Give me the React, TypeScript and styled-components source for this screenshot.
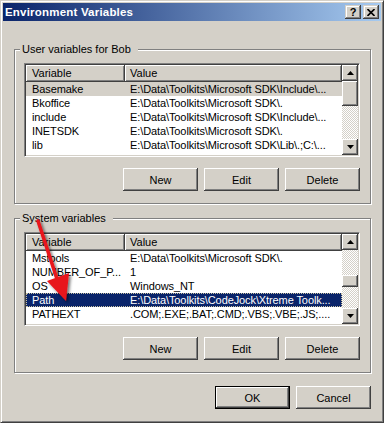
import React from 'react';
import styled, { createGlobalStyle, css } from 'styled-components';

const FACE = '#d4d0c8';

const GlobalStyle = createGlobalStyle`
  html, body {
    margin: 0;
    padding: 0;
    background: ${FACE};
  }
  body {
    font-family: "Liberation Sans", Arial, sans-serif;
    font-size: 11px;
    color: #000;
  }
`;

const raised = css`
  background: ${FACE};
  box-shadow: inset -1px -1px #404040, inset 1px 1px #fff, inset -2px -2px #808080, inset 2px 2px ${FACE};
`;

const Window = styled.div`
  position: relative;
  box-sizing: border-box;
  width: 384px;
  height: 423px;
  padding: 2px;
  background: ${FACE};
  border: 1px solid;
  border-color: ${FACE} #404040 #404040 ${FACE};
  box-shadow: inset 1px 1px #fff, inset -1px -1px #808080;
  display: flex;
  flex-direction: column;
`;

const TitleBar = styled.div`
  height: 18px;
  flex: none;
  display: flex;
  align-items: center;
  padding: 0 2px;
  background: linear-gradient(to right, #0a246a, #a6caf0);
`;

const Title = styled.span`
  color: #fff;
  font-weight: bold;
  font-size: 11.5px;
  letter-spacing: 0.2px;
  white-space: nowrap;
`;

const CaptionButtons = styled.div`
  margin-left: auto;
  display: flex;
  gap: 2px;
`;

const CaptionButton = styled.div`
  box-sizing: border-box;
  width: 16px;
  height: 14px;
  display: flex;
  align-items: center;
  justify-content: center;
  background: ${FACE};
  box-shadow: inset -1px -1px #404040, inset 1px 1px ${FACE}, inset -2px -2px #808080, inset 2px 2px #fff;
  font-weight: bold;
  font-size: 11px;
  line-height: 14px;
`;

const Body = styled.div`
  flex: 1;
  display: flex;
  flex-direction: column;
  padding: 22px 10px 0 11px;
`;

const GroupBox = styled.fieldset<{ $gap?: number }>`
  margin: ${(p) => p.$gap ?? 0}px 0 0 0;
  padding: 0;
  min-width: 0;
  border: 1px solid #808080;
  box-shadow: inset 1px 1px #fff, 1px 1px #fff;
`;

const Legend = styled.legend`
  margin-left: 5px;
  padding: 0 7px 0 2px;
  line-height: 13px;
  height: 13px;
  background: ${FACE};
`;

const GroupInner = styled.div`
  display: flex;
  flex-direction: column;
  padding: 7px 10px 12px 9px;
`;

const ListView = styled.div`
  box-sizing: border-box;
  height: 94px;
  display: flex;
  background: #fff;
  border: 1px solid;
  border-color: #808080 #fff #fff #808080;
  box-shadow: inset 1px 1px #404040, inset -1px -1px ${FACE};
  padding: 1px;
`;

const ListBody = styled.div`
  flex: 1;
  min-width: 0;
  overflow: hidden;
  display: flex;
  flex-direction: column;
`;

const Header = styled.div`
  flex: none;
  display: grid;
  grid-template-columns: 99px 1fr;
  height: 17px;
`;

const HeaderCell = styled.div<{ $pad: number }>`
  background: ${FACE};
  box-shadow: inset -1px -1px #404040, inset 1px 1px #fff, inset -2px -2px #808080;
  padding-left: ${(p) => p.$pad}px;
  line-height: 17px;
  white-space: nowrap;
  overflow: hidden;
`;

const Row = styled.div<{ $sel?: 'focus' | 'idle' }>`
  flex: none;
  display: grid;
  grid-template-columns: 99px 1fr;
  height: 14px;
  line-height: 14px;
  ${(p) =>
    p.$sel === 'idle' &&
    css`
      background: ${FACE};
    `}
  ${(p) =>
    p.$sel === 'focus' &&
    css`
      background: #0a246a;
      color: #fff;
      outline: 1px dotted #c8c0a0;
      outline-offset: -1px;
    `}
`;

const Cell = styled.div<{ $pad: number }>`
  padding-left: ${(p) => p.$pad}px;
  white-space: nowrap;
  overflow: hidden;
  letter-spacing: -0.1px;
`;

const ScrollBar = styled.div`
  flex: none;
  width: 16px;
  display: flex;
  flex-direction: column;
`;

const ScrollButton = styled.div`
  ${raised};
  flex: none;
  height: 16px;
  display: flex;
  align-items: center;
  justify-content: center;
`;

const Track = styled.div<{ $size?: number }>`
  flex: ${(p) => (p.$size === undefined ? '1' : `0 0 ${p.$size}px`)};
  background-color: ${FACE};
  background-image: conic-gradient(#fff 25%, ${FACE} 0 50%, #fff 0 75%, ${FACE} 0);
  background-size: 2px 2px;
`;

const Thumb = styled.div<{ $size: number }>`
  ${raised};
  flex: 0 0 ${(p) => p.$size}px;
`;

const ButtonRow = styled.div<{ $top: number }>`
  display: flex;
  justify-content: flex-end;
  gap: 6px;
  margin-top: ${(p) => p.$top}px;
`;

const PushButton = styled.button<{ $default?: boolean }>`
  ${raised};
  box-sizing: border-box;
  width: 75px;
  height: 23px;
  margin: 0;
  padding: 0;
  border: none;
  font-family: inherit;
  font-size: 11px;
  color: #000;
  ${(p) =>
    p.$default &&
    css`
      border: 1px solid #000;
    `}
`;

const Arrow = styled.svg`
  position: absolute;
  left: -1px;
  top: -1px;
  pointer-events: none;
`;

type Item = { name: string; value: string };

const userVars: Item[] = [
  { name: 'Basemake', value: 'E:\\Data\\Toolkits\\Microsoft SDK\\Include\\...' },
  { name: 'Bkoffice', value: 'E:\\Data\\Toolkits\\Microsoft SDK\\.' },
  { name: 'include', value: 'E:\\Data\\Toolkits\\Microsoft SDK\\Include\\...' },
  { name: 'INETSDK', value: 'E:\\Data\\Toolkits\\Microsoft SDK\\.' },
  { name: 'lib', value: 'E:\\Data\\Toolkits\\Microsoft SDK\\Lib\\.;C:\\...' },
];

const systemVars: Item[] = [
  { name: 'Mstools', value: 'E:\\Data\\Toolkits\\Microsoft SDK\\.' },
  { name: 'NUMBER_OF_P...', value: '1' },
  { name: 'OS', value: 'Windows_NT' },
  { name: 'Path', value: 'E:\\Data\\Toolkits\\CodeJock\\Xtreme Toolk...' },
  { name: 'PATHEXT', value: '.COM;.EXE;.BAT;.CMD;.VBS;.VBE;.JS;....' },
];

function ArrowGlyph({ down }: { down?: boolean }) {
  return (
    <svg width="7" height="4" viewBox="0 0 7 4">
      <polygon points={down ? '0,0 7,0 3.5,4' : '0,4 7,4 3.5,0'} fill="#000" />
    </svg>
  );
}

function VarList({ items, selected, focus, thumbTop, thumbSize }: {
  items: Item[];
  selected: number;
  focus?: boolean;
  thumbTop: number;
  thumbSize: number;
}) {
  return (
    <ListView>
      <ListBody>
        <Header>
          <HeaderCell $pad={6}>Variable</HeaderCell>
          <HeaderCell $pad={5}>Value</HeaderCell>
        </Header>
        {items.map((it, i) => (
          <Row key={it.name} $sel={i === selected ? (focus ? 'focus' : 'idle') : undefined}>
            <Cell $pad={6}>{it.name}</Cell>
            <Cell $pad={5}>{it.value}</Cell>
          </Row>
        ))}
      </ListBody>
      <ScrollBar>
        <ScrollButton><ArrowGlyph /></ScrollButton>
        <Track $size={thumbTop} />
        <Thumb $size={thumbSize} />
        <Track />
        <ScrollButton><ArrowGlyph down /></ScrollButton>
      </ScrollBar>
    </ListView>
  );
}

export default function App() {
  return (
    <>
      <GlobalStyle />
      <Window>
        <TitleBar>
          <Title>Environment Variables</Title>
          <CaptionButtons>
            <CaptionButton>?</CaptionButton>
            <CaptionButton>
              <svg width="8" height="7" viewBox="0 0 8 7">
                <path d="M0.5 0 L7.5 7 M7.5 0 L0.5 7" stroke="#000" strokeWidth="1.6" />
              </svg>
            </CaptionButton>
          </CaptionButtons>
        </TitleBar>
        <Body>
          <GroupBox>
            <Legend>User variables for Bob</Legend>
            <GroupInner>
              <VarList items={userVars} selected={0} thumbTop={0} thumbSize={25} />
              <ButtonRow $top={11}>
                <PushButton>New</PushButton>
                <PushButton>Edit</PushButton>
                <PushButton>Delete</PushButton>
              </ButtonRow>
            </GroupInner>
          </GroupBox>
          <GroupBox $gap={8}>
            <Legend>System variables</Legend>
            <GroupInner>
              <VarList items={systemVars} selected={3} focus thumbTop={25} thumbSize={12} />
              <ButtonRow $top={11}>
                <PushButton>New</PushButton>
                <PushButton>Edit</PushButton>
                <PushButton>Delete</PushButton>
              </ButtonRow>
            </GroupInner>
          </GroupBox>
          <ButtonRow $top={13}>
            <PushButton $default>OK</PushButton>
            <PushButton>Cancel</PushButton>
          </ButtonRow>
        </Body>
        <Arrow width="384" height="423" viewBox="0 0 384 423">
          <defs>
            <filter id="arrowShadow" x="-50%" y="-50%" width="200%" height="200%">
              <feDropShadow dx="2" dy="2" stdDeviation="1.5" floodColor="#000" floodOpacity="0.55" />
            </filter>
          </defs>
          <g filter="url(#arrowShadow)">
            <line x1="38" y1="221" x2="57" y2="279" stroke="#e8141a" strokeWidth="3.5" strokeLinecap="round" />
            <polygon points="47,281 69,273 66,301" fill="#e8141a" />
          </g>
        </Arrow>
      </Window>
    </>
  );
}
